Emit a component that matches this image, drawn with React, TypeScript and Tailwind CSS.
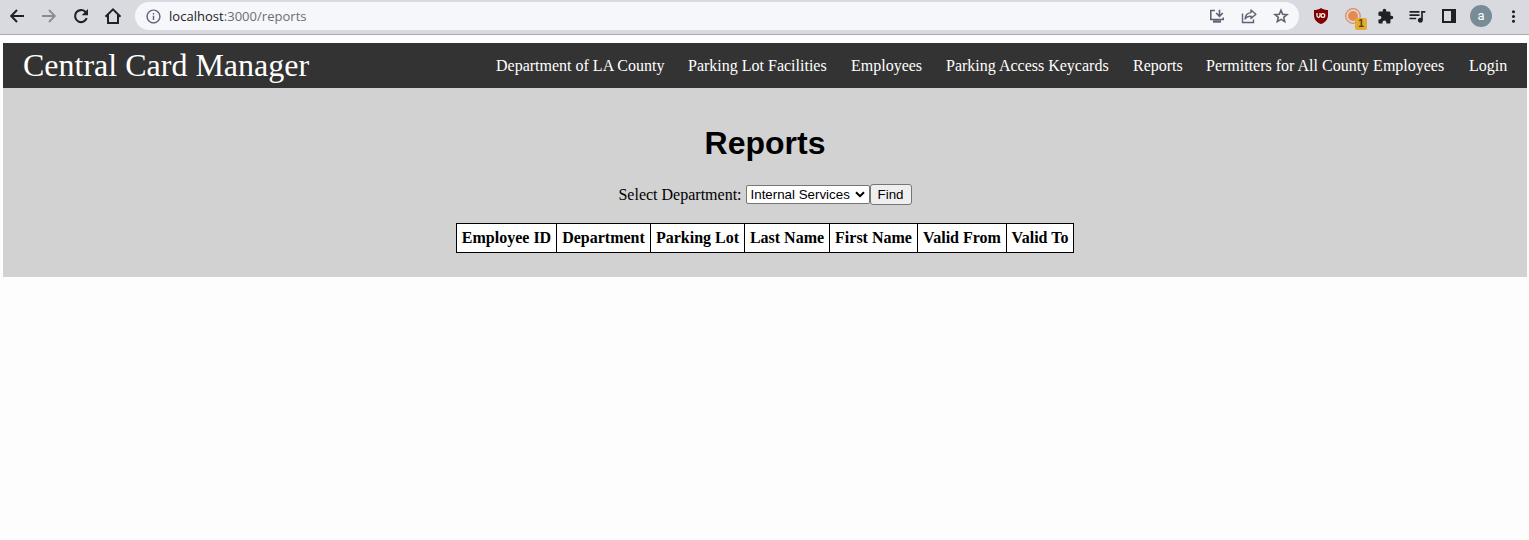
import type { ReactNode } from "react";
import { MdExtension, MdInfoOutline, MdMoreVert, MdQueueMusic } from "react-icons/md";

function Slot({ children }: { children: ReactNode }) {
  return <span className="relative flex h-7 w-8 shrink-0 items-center justify-center">{children}</span>;
}

function BackIcon() {
  return (
    <svg width="16" height="16" viewBox="0 0 16 16" fill="none" stroke="#202124" strokeWidth="2">
      <path d="M15 8H2.800M8 2 2.200 8 8 14" />
    </svg>
  );
}

function ForwardIcon() {
  return (
    <svg width="16" height="16" viewBox="0 0 16 16" fill="none" stroke="#908a8e" strokeWidth="1.800">
      <path d="M1 8h12.200M8 2l5.800 6L8 14" />
    </svg>
  );
}

function ReloadIcon() {
  return (
    <svg width="16" height="16" viewBox="0 0 16 16">
      <path d="M13.700 10.200A6 6 0 1 1 12.300 3.800L13 4.500" fill="none" stroke="#202124" strokeWidth="2.100" />
      <path d="M15 1v6.300H8.700z" fill="#202124" />
    </svg>
  );
}

function HomeIcon() {
  return (
    <svg width="18" height="18" viewBox="0 0 18 18" fill="none" stroke="#202124" strokeWidth="2">
      <path d="M1.500 9.700 9 2.300l7.500 7.400M4 8v8h10V8" />
    </svg>
  );
}

function InstallIcon() {
  return (
    <svg width="16" height="16" viewBox="0 0 16 16" fill="none" stroke="#5f6273" strokeWidth="1.600">
      <path d="M6 2.500H1.800v9h12.400V9.500" />
      <path d="M10.500 1.800v6M7.200 5l3.300 3.300L13.800 5" />
      <path d="M4 13.500h8" strokeWidth="2.400" />
    </svg>
  );
}

function ShareIcon() {
  return (
    <svg width="16" height="16" viewBox="0 0 16 16" fill="none" stroke="#5f6273" strokeWidth="1.400">
      <path d="M1.500 5.500v9h11v-3" />
      <path d="M10 2 14.900 6.200 10 10.400V8.100C7 8.100 5.200 9 4 11c.3-3.700 2.300-6 6-6.400z" strokeLinejoin="round" />
    </svg>
  );
}

function StarIcon() {
  return (
    <svg width="16" height="16" viewBox="0 0 16 16" fill="none" stroke="#5f6273" strokeWidth="1.600">
      <path d="m8 2.200 1.700 4 4.300.4-3.300 2.800 1 4.200L8 11.400l-3.700 2.200 1-4.200L2 6.600l4.300-.4z" />
    </svg>
  );
}

function ShieldIcon() {
  return (
    <svg width="16" height="16" viewBox="0 0 16 16">
      <path d="M8 0c2.200 1.500 4.500 2 7 2v5c0 5-3 7.500-7 9-4-1.500-7-4-7-9V2c2.500 0 4.800-.5 7-2z" fill="#800000" />
      <path d="M4 5v2.800a1.500 1.500 0 0 0 3 0V5" fill="none" stroke="#fff" strokeWidth="1.200" />
      <circle cx="9.900" cy="7.500" r="1.900" fill="none" stroke="#fff" strokeWidth="1.200" />
    </svg>
  );
}

function RecorderIcon() {
  return (
    <svg width="16" height="16" viewBox="0 0 16 16">
      <circle cx="8" cy="8" r="7.300" fill="none" stroke="#e58a55" strokeWidth="1.300" />
      <circle cx="8" cy="8" r="5" fill="#e58a50" />
    </svg>
  );
}

function PanelIcon() {
  return (
    <svg width="14" height="14" viewBox="0 0 14 14">
      <path d="M0 0h14v14H0zM2 2v10h7V2z" fill="#202124" fillRule="evenodd" />
    </svg>
  );
}

function BrowserBar() {
  return (
    <div className="flex h-[35px] items-start border-b border-[#a9abb0] bg-[#d9dae0] pt-[2px] pl-px text-[#202124]">
      <Slot><BackIcon /></Slot>
      <Slot><ForwardIcon /></Slot>
      <Slot><ReloadIcon /></Slot>
      <Slot><HomeIcon /></Slot>
      <div className="ml-[6px] flex h-7 w-[1164px] items-center rounded-full bg-[#f5f7fa] pr-[2px] pl-[10px]">
        <MdInfoOutline size={17} color="#5f6273" />
        <span className="ml-[7px] flex-1 font-['Open_Sans',sans-serif] text-[13px] leading-[18px] tracking-[0.03px] text-[#6b6e72]">
          <span className="text-[#202124]">localhost</span>:3000/reports
        </span>
        <Slot><InstallIcon /></Slot>
        <Slot><ShareIcon /></Slot>
        <Slot><StarIcon /></Slot>
      </div>
      <div className="ml-[6px] flex">
        <Slot><ShieldIcon /></Slot>
        <Slot>
          <RecorderIcon />
          <span className="absolute top-4 left-[18px] flex h-3 w-3 items-center justify-center rounded-[2px] bg-[#e2ac34] font-['Liberation_Sans',sans-serif] text-[10px] leading-3 font-bold text-[#5a3a10]">
            1
          </span>
        </Slot>
        <Slot><MdExtension size={17} /></Slot>
        <Slot><MdQueueMusic size={20} /></Slot>
        <Slot><PanelIcon /></Slot>
        <Slot>
          <span className="flex h-[22px] w-[22px] items-center justify-center rounded-full bg-[#788c98] pb-px font-['Roboto',sans-serif] text-[13px] leading-none text-white">
            a
          </span>
        </Slot>
        <Slot><MdMoreVert size={19} /></Slot>
      </div>
    </div>
  );
}

const links = [
  { label: "Department of LA County", width: "w-[192px]" },
  { label: "Parking Lot Facilities", width: "w-[163px]" },
  { label: "Employees", width: "w-[95px]" },
  { label: "Parking Access Keycards", width: "w-[187px]" },
  { label: "Reports", width: "w-[73px]" },
  { label: "Permitters for All County Employees", width: "w-[263px]" },
  { label: "Login", width: "w-[58px]" },
];

const columns = [
  { label: "Employee ID", width: "w-[100px]" },
  { label: "Department", width: "w-[94px]" },
  { label: "Parking Lot", width: "w-[94px]" },
  { label: "Last Name", width: "w-[85px]" },
  { label: "First Name", width: "w-[88px]" },
  { label: "Valid From", width: "w-[89px]" },
  { label: "Valid To", width: "w-[67px]" },
];

export default function App() {
  return (
    <div className="h-[540px] w-[1529px] overflow-hidden bg-[#fdfdfd] font-['Liberation_Serif',serif] text-base text-black">
      <BrowserBar />
      <div className="mt-2 mr-[2px] ml-[3px] bg-[#d2d2d2]">
        <nav className="flex h-[45px] items-center justify-between bg-[#333] pl-5 text-white">
          <span className="text-[32px] leading-[45px] whitespace-nowrap">Central Card Manager</span>
          <div className="flex">
            {links.map((l) => (
              <a key={l.label} className={`${l.width} shrink-0 leading-[18px] whitespace-nowrap`}>{l.label}</a>
            ))}
          </div>
        </nav>
        <main className="flex h-[189px] flex-col items-center">
          <h1 className="mt-[37px] font-['Liberation_Sans',sans-serif] text-[32px] leading-[37px] font-bold">Reports</h1>
          <div className="mt-[22px] flex h-[21px] items-center">
            <span className="mr-1 leading-[18px] whitespace-nowrap">Select Department:</span>
            <div className="flex h-[19px] w-[124px] items-center justify-between rounded-[2px] border border-[#767676] bg-white pr-1 pl-1 font-['Liberation_Sans',sans-serif] text-[13.333px] leading-[15px]">
              <span className="whitespace-nowrap">Internal Services</span>
              <svg width="10" height="7" viewBox="0 0 10 7" fill="none" stroke="#000" strokeWidth="2">
                <path d="M1 1.200 5 5.200l4-4" />
              </svg>
            </div>
            <button className="h-[21px] w-[42px] rounded-[3px] border border-[#767676] bg-[#efefef] font-['Liberation_Sans',sans-serif] text-[13.333px] leading-[15px]">
              Find
            </button>
          </div>
          <table className="mt-[18px] table-fixed border-separate border-spacing-0 border-l border-black bg-white">
            <thead>
              <tr>
                {columns.map((c) => (
                  <th key={c.label} className={`${c.width} h-[30px] border-y border-r border-black p-0 text-center leading-[18px] font-bold whitespace-nowrap`}>
                    {c.label}
                  </th>
                ))}
              </tr>
            </thead>
          </table>
        </main>
      </div>
    </div>
  );
}
